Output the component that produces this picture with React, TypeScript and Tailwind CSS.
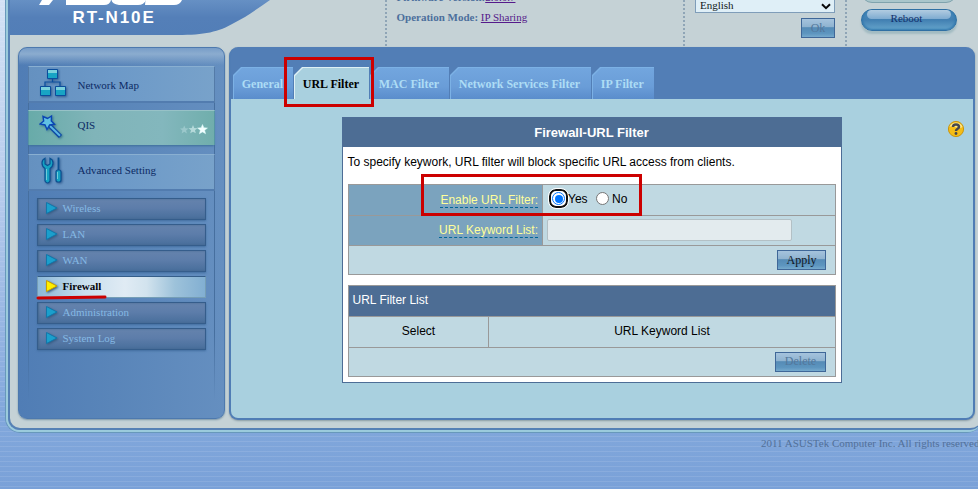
import React from 'react';
import clsx from 'clsx';

const serif = "font-['Liberation_Serif',serif]";
const sans = "font-['Liberation_Sans',sans-serif]";

function Logo() {
  return (
    <svg className="absolute left-0 top-0" width="265" height="36" viewBox="10 0 265 36">
      <defs>
        <linearGradient id="head" x1="0" x2="0" y1="0" y2="1">
          <stop offset="0" stopColor="#6690c4" />
          <stop offset="0.5" stopColor="#547fb8" />
          <stop offset="1" stopColor="#527eb7" />
        </linearGradient>
      </defs>
      <path d="M10 0H270C257 9 246 17 234 23C219 32 204 35 178 35H10Z" fill="url(#head)" />
      <g fill="#fff">
        <path d="M42 0H53L49 5H39Z" />
        <path d="M66 0H111Q110 5 104 5H66Z" />
        <path d="M111.500 0H146Q144 5 138 5H119Q112 4 111.500 0Z" />
        <path d="M145.500 0H182Q180 5 174 5H145Z" />
      </g>
    </svg>
  );
}

function Dots() {
  return <div className="h-[47px] w-[2px] shrink-0 bg-[repeating-linear-gradient(180deg,#8fa5b6_0px,#8fa5b6_2px,transparent_2px,transparent_4px)]" />;
}

function GlossButton({ label, off, className }: { label: string; off?: boolean; className: string }) {
  return (
    <button
      className={clsx(
        serif,
        'flex h-5 items-center justify-center border border-[#3f6798] bg-[linear-gradient(180deg,#a5c3dd_0%,#8fb3d0_44%,#558bb6_48%,#5d95bf_80%,#75a9cd_100%)] text-[12px] leading-none',
        off ? 'text-[#54789c]' : 'text-[#10161e]',
        className,
      )}
    >
      {label}
    </button>
  );
}

function Header() {
  return (
    <header className="relative flex h-[47px] shrink-0 items-start">
      <Logo />
      <div className={clsx(sans, 'relative w-[375px] shrink-0 pl-[62.500px] pt-[8px] text-[17px] font-bold leading-[20px] tracking-[1.900px] text-white')}>
        RT-N10E
      </div>
      <Dots />
      <div className="-mt-[13px] w-[296px] shrink-0 pl-[9.500px] text-[11px] leading-[20px] text-[#4c6f9c]">
        <p>
          <b>Firmware Version:</b>
          <a className="text-[#551a8b] underline">2.0.0.7</a>
        </p>
        <p>
          <b>Operation Mode: </b>
          <a className="text-[#551a8b] underline">IP Sharing</a>
        </p>
      </div>
      <Dots />
      <div className="flex w-[160px] shrink-0 flex-col items-end pl-[10px] pr-[10px]">
        <div className="-mt-[5px] flex h-[18px] w-[140px] items-center justify-between border border-[#7f9db9] bg-[#dfeff7] pl-[4px] pr-[3px] text-[11px] leading-none text-[#101820]">
          <span className="pt-[3px]">English</span>
          <svg width="10" height="7" viewBox="0 0 10 7" className="mt-[4px]">
            <path d="M1 1.2L5 5.2L9 1.2" fill="none" stroke="#080808" strokeWidth="2" />
          </svg>
        </div>
        <GlossButton label="Ok" off className="mt-[5px] w-[34px]" />
      </div>
      <Dots />
      <div className="flex flex-col pl-[14px] text-[11px] text-[#12306a]">
        <div className="-mt-[19px] h-[22px] w-[96px] rounded-full border border-[#7fa3ad] bg-[#a9c6cc]" />
        <button className="relative mt-[6px] flex h-[22px] w-[96px] justify-center rounded-full border border-[#2f70a4] bg-[linear-gradient(180deg,#4a8cbd_0%,#4280b2_50%,#66a5cc_100%)] pr-[5px] leading-[17px] shadow-[inset_0_0_2px_1px_#347bb0,0_3px_2px_#a2bbc2]">
          <span className="absolute left-[5px] right-[5px] top-0 h-[9px] rounded-full bg-[linear-gradient(180deg,#b2cce1,#7eabd0)]" />
          <span className="relative">Reboot</span>
        </button>
      </div>
    </header>
  );
}

function NetworkIcon() {
  return (
    <svg width="28" height="30" viewBox="0 0 28 30" className="-mt-[4px] drop-shadow-[1px_1px_1px_#315c8f]">
      <path d="M13.500 10V14M6 18V14H21V18" fill="none" stroke="#0a4d9c" strokeWidth="1.2" />
      <g fill="#18a4c4" stroke="#0a4d9c">
        <path d="M8.500 1.500h10v9h-10zM1.500 18.500h10v9h-10zM16.500 18.500h10v9h-10z" />
      </g>
      <path d="M9 2h9v3H9zM2 19h9v3H2zM17 19h9v3h-9z" fill="#7ad0dc" />
    </svg>
  );
}

function WandIcon() {
  return (
    <svg width="28" height="28" viewBox="0 0 28 28" className="drop-shadow-[1px_1px_1px_#34708c]">
      <path d="M11 12L21.500 22.500" stroke="#0a45a5" strokeWidth="4.500" />
      <path d="M11 12L21 21.800" stroke="#5cb6e2" strokeWidth="2" />
      <path d="M4 2.500L8.500 4.500L12.500 2L12.300 7L15.500 10.300L10.600 11L8 15.500L6 10.800L1 10L4.700 7Z" fill="#61c1e4" stroke="#0a45b5" strokeWidth="1.400" />
    </svg>
  );
}

function ToolsIcon() {
  return (
    <svg width="28" height="30" viewBox="0 0 28 30" className="-mt-[4px] drop-shadow-[1px_1px_1px_#315c8f]">
      <path d="M6 2.200C2 4 2 10 6 12.500V25Q8.500 29 11 25V12.500C15 10 15 4 11 2.200V8L8.500 9.500L6 8Z" fill="#15a2c2" stroke="#0b5192" strokeWidth="1.200" />
      <path d="M7.500 13V24" stroke="#71cbd9" strokeWidth="1" />
      <path d="M19.500 1.500V14" stroke="#0b5192" strokeWidth="1.800" />
      <rect x="17" y="14" width="5" height="12" rx="2" fill="#15a2c2" stroke="#0b5192" strokeWidth="1.200" />
      <path d="M18.500 16V23" stroke="#71cbd9" strokeWidth="1" />
    </svg>
  );
}

function Stars() {
  const star = 'M5 0L6.400 3.200L10 3.500L7.200 5.800L8.100 9.300L5 7.400L1.900 9.300L2.800 5.800L0 3.500L3.600 3.200Z';
  return (
    <svg width="28" height="12" viewBox="0 0 28 12" className="mt-[3px]">
      <path d={star} transform="translate(0 1.500) scale(.85)" fill="#9bc8cb" />
      <path d={star} transform="translate(8.500 1) scale(.9)" fill="#b5dada" />
      <path d={star} transform="translate(17.500 .5)" fill="#f4ffff" stroke="#d5f6f5" strokeWidth=".5" />
    </svg>
  );
}

const links = ['Wireless', 'LAN', 'WAN', 'Firewall', 'Administration', 'System Log'];

function Sidebar() {
  const bar = 'flex h-[37px] shrink-0 items-center border-x border-t border-[#547ba8] border-t-[#89afd1] bg-[linear-gradient(90deg,#6591c0,#6c99c8_45%,#78a2ca)] pl-[10px] text-[11px] text-[#0d2b65] shadow-[inset_0_-2px_0_#527caf]';
  return (
    <nav className="relative h-[372px] w-[207px] shrink-0 rounded-[9px] border border-[#4d79ae] bg-[linear-gradient(180deg,#789dc8_0px,#8baccf_6px,rgba(120,157,200,0)_17px),linear-gradient(90deg,#507db5,#5985b9_45%,#658fc0)] pl-[9px] pr-[10px] pt-[18px] shadow-[0_1px_2px_#7894a7]">
      <div className="relative h-[334px] w-[187px]">
        <div className="absolute inset-0 bg-[linear-gradient(90deg,#466f9f_1px,transparent_1px,transparent_186px,#466f9f_186px)] [mask-image:linear-gradient(180deg,#000_80%,transparent)]" />
        <div className="relative flex flex-col">
          <div className={bar}>
            <NetworkIcon />
            <span className="ml-[10.500px]">Network Map</span>
          </div>
          <div className="mt-[7px] flex h-[35px] items-center border-x border-t border-[#5594a4] border-t-[#97c2c7] bg-[linear-gradient(90deg,#68aba9,#80b4b9_35%,#83b7bd_72%,#70aeac)] pl-[10px] text-[11px] text-[#0d2b65] shadow-[0_2px_2px_-1px_#3c6f9a]">
            <WandIcon />
            <span className="-mt-[5px] ml-[10.500px]">QIS</span>
            <span className="ml-auto mr-[6px]"><Stars /></span>
          </div>
          <div className={clsx(bar, 'mt-[9px]')}>
            <ToolsIcon />
            <span className="-mt-[6px] ml-[10.500px]">Advanced Setting</span>
          </div>
          <div className="mt-[7px] flex flex-col gap-[4px] pl-[9px]">
            {links.map((name) => {
              const active = name === 'Firewall';
              return (
                <a
                  key={name}
                  className={clsx(
                    'flex h-[22px] w-[169px] items-center border pl-[8px] text-[11px]',
                    active
                      ? 'border-[#759eb6] border-t-[#355e89] bg-[linear-gradient(90deg,#8db9d8,#c9dfee_28%,#e0ebf4_52%,#d2e3ee_65%,#9dc2da_82%,#82afd2)] font-bold text-[#05050a]'
                      : 'border-[#355d8b] bg-[linear-gradient(180deg,#6583ad,#5d7daa_45%,#486e9b)] text-[#85b9e4] shadow-[inset_1px_0_2px_#44698f,0_1px_2px_#416d9e]',
                  )}
                >
                  <svg width="14" height="14" viewBox="0 0 14 14" className="-mt-[2px] drop-shadow-[1px_1px_1px_#355b82]">
                    <path d="M.5 1.500L11 7L.5 12.500Z" fill={active ? '#ffef00' : '#1b9fcc'} stroke={active ? '#c99f00' : '#1277aa'} />
                  </svg>
                  <span className="-mt-[1px] ml-[2.500px] leading-[13px]">{name}</span>
                </a>
              );
            })}
          </div>
        </div>
      </div>
    </nav>
  );
}

function Tab({ name, width, active }: { name: string; width: string; active?: boolean }) {
  return (
    <div className={clsx('h-[32px] shrink-0 pl-px pt-px [clip-path:polygon(8px_0,100%_0,100%_100%,0_100%,0_8px)]', width, active ? 'bg-[#def0f4]' : 'bg-[#7cb1e5]')}>
      <div
        className={clsx(
          'h-full whitespace-nowrap pl-[7.750px] text-[12px] font-bold leading-[32px] [clip-path:polygon(8px_0,100%_0,100%_100%,0_100%,0_8px)]',
          active ? 'bg-[#a9d0df] text-black' : 'bg-[linear-gradient(180deg,#72a6de,#6a9dd8_60%,#5a8dcc)] text-[#addcf5]',
        )}
      >
        {name}
      </div>
    </div>
  );
}

function Radio({ on }: { on?: boolean }) {
  return on ? (
    <span className="flex h-[19px] w-[19px] items-center justify-center rounded-[7px] border-2 border-[#101010] bg-white outline outline-1 outline-white">
      <span className="flex h-[13px] w-[13px] shrink-0 items-center justify-center rounded-full border border-[#0075ff] bg-white">
        <span className="h-[8px] w-[8px] shrink-0 rounded-full bg-[#0075ff]" />
      </span>
    </span>
  ) : (
    <span className="h-[13px] w-[13px] rounded-full border border-[#767676] bg-white" />
  );
}

function Card() {
  const label = 'flex w-[194px] shrink-0 items-start justify-end border-r border-[#999] bg-[#7ba3be] pr-[4px] text-[#ffff99]';
  return (
    <section className={clsx(sans, 'h-[266px] w-[500px] border border-[#4d6d96] bg-white text-[12px] text-black')}>
      <h1 className="h-[29px] bg-[#4d6d94] pr-px text-center text-[13px] font-bold leading-[30px] text-white">Firewall-URL Filter</h1>
      <p className="h-[37px] whitespace-nowrap pl-[4.500px] leading-[30px]">To specify keywork, URL filter will block specific URL access from clients.</p>
      <div className="ml-[5px] h-[91px] w-[488px] border border-[#999] bg-[#c0d9e2]">
        <div className="flex h-[31px] border-b border-[#999]">
          <div className={label}>
            <span className="mt-[7px] h-[16px] border-b border-dashed border-[#006699] leading-[16px]">Enable URL Filter:</span>
          </div>
          <div className="flex items-center pb-[3px] pl-[6px]">
            <Radio on />
            <span className="w-[28px]">Yes</span>
            <Radio />
            <span className="pl-[3px]">No</span>
          </div>
        </div>
        <div className="flex h-[30px] border-b border-[#999]">
          <div className={label}>
            <span className="mt-[6px] h-[16px] border-b border-dashed border-[#006699] leading-[16px]">URL Keyword List:</span>
          </div>
          <div className="ml-[4px] mt-[3px] h-[22px] w-[245px] rounded-[2px] border border-[#b3c0c5] bg-[#e3ebee]" />
        </div>
        <div className="flex h-[28px] items-center justify-end pr-[9px]">
          <GlossButton label="Apply" className="w-[49px]" />
        </div>
      </div>
      <div className="ml-[5px] mt-[10px] h-[92px] w-[488px] border border-[#999] bg-[#c0d9e2]">
        <div className="h-[31px] border-b border-[#999] bg-[#4d6d94] pl-[3.500px] leading-[28px] text-white">URL Filter List</div>
        <div className="flex h-[31px] border-b border-[#999] text-center leading-[28px]">
          <div className="w-[140px] border-r border-[#999]">Select</div>
          <div className="flex-1">URL Keyword List</div>
        </div>
        <div className="flex h-[28px] items-center justify-end pr-[9px]">
          <GlossButton label="Delete" off className="w-[51px] pb-[2px]" />
        </div>
      </div>
    </section>
  );
}

export default function App() {
  return (
    <div className={clsx(serif, 'relative h-[489px] w-[978px] overflow-hidden bg-[repeating-linear-gradient(180deg,transparent_0px,transparent_1px,rgba(255,255,255,.1)_1px,rgba(255,255,255,.1)_2px,transparent_2px,transparent_5px),linear-gradient(180deg,#d3e2f5_0px,#b7cced_190px,#82a8dc_410px,#7aa1d8_489px)]')}>
      <div className="ml-[5px] h-[433px] w-[973px] overflow-hidden">
        <div className="h-[433px] w-[977px] rounded-b-[15px] border-b border-l border-[#6798bb]">
          <div className="h-[432px] rounded-b-[14px] border-b-2 border-l-2 border-[#9bcbdc]">
            <div className="h-[430px] rounded-b-[12px] border-b-2 border-l-2 border-[#5681b5] bg-[#c5d2d6]">
              <Header />
              <div className="flex gap-[4px] pl-[8px]">
                <Sidebar />
                <main className="flex h-[373px] w-[746px] shrink-0 flex-col rounded-[9px] border-x-2 border-b-2 border-[#507db5] bg-[#527eb6] shadow-[0_1px_2px_#8a9ca5]">
                  <div className="flex h-[52px] shrink-0 items-end gap-px pl-[2px]">
                    <Tab name="General" width="w-[60px]" />
                    <Tab name="URL Filter" width="w-[75px]" active />
                    <Tab name="MAC Filter" width="w-[79px]" />
                    <Tab name="Network Services Filter" width="w-[141px]" />
                    <Tab name="IP Filter" width="w-[62px]" />
                  </div>
                  <div className="flex flex-1 items-start rounded-b-[7px] bg-[#a9d0df] pl-[111px] pt-[18px]">
                    <Card />
                    <svg className="ml-[105px] mt-[3px]" width="18" height="18" viewBox="0 0 18 18">
                      <circle cx="9" cy="9" r="7.600" fill="#f5bd15" stroke="#c99510" />
                      <path d="M2.500 7C4 1 14 1 15.500 7C12 10 6 5 2.500 7Z" fill="#ffe783" />
                      <path d="M6 7C6 3.500 12 3.500 12 7C12 9 9 8.500 9 11" fill="none" stroke="#46474d" strokeWidth="2.500" />
                      <circle cx="9" cy="13.500" r="1.400" fill="#46474d" />
                    </svg>
                  </div>
                </main>
              </div>
            </div>
          </div>
        </div>
      </div>
      <footer className="whitespace-nowrap pl-[761px] pt-[4px] text-[11px] leading-[13px] text-[#527099]">2011 ASUSTek Computer Inc. All rights reserved.</footer>
      <div className="absolute left-[284px] top-[57px] h-[50px] w-[90px] border-[3px] border-[#cc0000]" />
      <div className="absolute left-[421px] top-[174px] h-[42px] w-[221px] border-[3px] border-[#cc0000]" />
      <svg className="absolute left-[36px] top-[294px]" width="72" height="6">
        <path d="M2 4L69 3" stroke="#cc0000" strokeWidth="3" strokeLinecap="round" />
      </svg>
    </div>
  );
}
